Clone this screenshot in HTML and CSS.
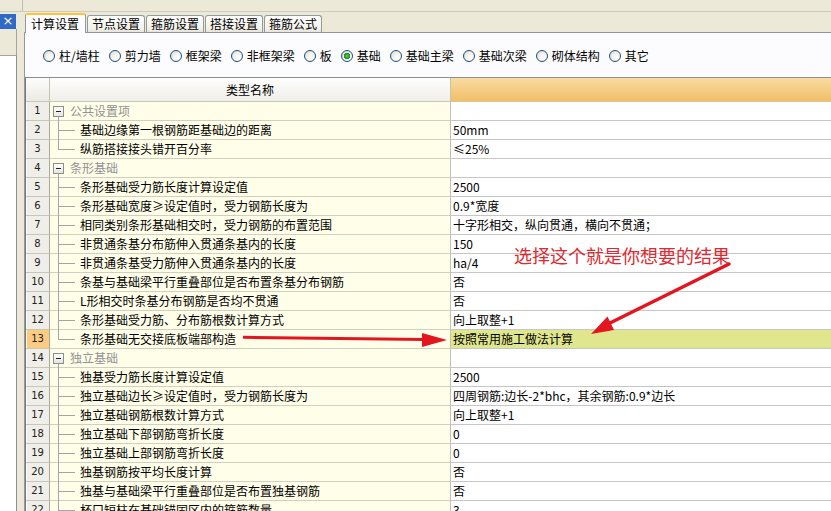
FILE: index.html
```html
<!DOCTYPE html>
<html lang="zh-CN">
<head>
<meta charset="utf-8">
<title>计算设置</title>
<link rel="stylesheet" href="styles.css">
</head>
<body>
<div class="app">
  <div class="topstrip"><div class="topstrip-left"></div></div>
  <div class="main">
    <aside class="side">
      <div class="close">×</div>
      <div class="side-gap"></div>
      <div class="side-list"></div>
    </aside>
    <section class="work">
      <nav class="tabbar">
        <div class="tab active">计算设置</div>
        <div class="tab">节点设置</div>
        <div class="tab">箍筋设置</div>
        <div class="tab">搭接设置</div>
        <div class="tab">箍筋公式</div>
      </nav>
      <div class="panel">
        <div class="radios">
          <span class="opt"><span class="radio"></span>柱/墙柱</span>
          <span class="opt"><span class="radio"></span>剪力墙</span>
          <span class="opt"><span class="radio"></span>框架梁</span>
          <span class="opt"><span class="radio"></span>非框架梁</span>
          <span class="opt"><span class="radio"></span>板</span>
          <span class="opt"><span class="radio checked"></span>基础</span>
          <span class="opt"><span class="radio"></span>基础主梁</span>
          <span class="opt"><span class="radio"></span>基础次梁</span>
          <span class="opt"><span class="radio"></span>砌体结构</span>
          <span class="opt"><span class="radio"></span>其它</span>
        </div>
        <div class="grid">
          <div class="hd hd-num"></div><div class="hd hd-name">类型名称</div><div class="hd hd-val"></div>

          <div class="num">1</div><div class="name group"><span class="toggle"><i class="box"></i></span><span>公共设置项</span></div><div class="val"></div>
          <div class="num">2</div><div class="name"><span class="guide"></span>基础边缘第一根钢筋距基础边的距离</div><div class="val">50mm</div>
          <div class="num">3</div><div class="name"><span class="guide last"></span>纵筋搭接接头错开百分率</div><div class="val">≤25%</div>
          <div class="num">4</div><div class="name group"><span class="toggle"><i class="box"></i></span><span>条形基础</span></div><div class="val"></div>
          <div class="num">5</div><div class="name"><span class="guide"></span>条形基础受力筋长度计算设定值</div><div class="val">2500</div>
          <div class="num">6</div><div class="name"><span class="guide"></span>条形基础宽度≥设定值时，受力钢筋长度为</div><div class="val">0.9*宽度</div>
          <div class="num">7</div><div class="name"><span class="guide"></span>相同类别条形基础相交时，受力钢筋的布置范围</div><div class="val">十字形相交，纵向贯通，横向不贯通；</div>
          <div class="num">8</div><div class="name"><span class="guide"></span>非贯通条基分布筋伸入贯通条基内的长度</div><div class="val">150</div>
          <div class="num">9</div><div class="name"><span class="guide"></span>非贯通条基受力筋伸入贯通条基内的长度</div><div class="val">ha/4</div>
          <div class="num">10</div><div class="name"><span class="guide"></span>条基与基础梁平行重叠部位是否布置条基分布钢筋</div><div class="val">否</div>
          <div class="num">11</div><div class="name"><span class="guide"></span>L形相交时条基分布钢筋是否均不贯通</div><div class="val">否</div>
          <div class="num">12</div><div class="name"><span class="guide"></span>条形基础受力筋、分布筋根数计算方式</div><div class="val">向上取整+1</div>
          <div class="num cur">13</div><div class="name"><span class="guide last"></span>条形基础无交接底板端部构造</div><div class="val sel">按照常用施工做法计算</div>
          <div class="num">14</div><div class="name group"><span class="toggle"><i class="box"></i></span><span>独立基础</span></div><div class="val"></div>
          <div class="num">15</div><div class="name"><span class="guide"></span>独基受力筋长度计算设定值</div><div class="val">2500</div>
          <div class="num">16</div><div class="name"><span class="guide"></span>独立基础边长≥设定值时，受力钢筋长度为</div><div class="val">四周钢筋:边长-2*bhc，其余钢筋:0.9*边长</div>
          <div class="num">17</div><div class="name"><span class="guide"></span>独立基础钢筋根数计算方式</div><div class="val">向上取整+1</div>
          <div class="num">18</div><div class="name"><span class="guide"></span>独立基础下部钢筋弯折长度</div><div class="val">0</div>
          <div class="num">19</div><div class="name"><span class="guide"></span>独立基础上部钢筋弯折长度</div><div class="val">0</div>
          <div class="num">20</div><div class="name"><span class="guide"></span>独基钢筋按平均长度计算</div><div class="val">否</div>
          <div class="num">21</div><div class="name"><span class="guide"></span>独基与基础梁平行重叠部位是否布置独基钢筋</div><div class="val">否</div>
          <div class="num">22</div><div class="name"><span class="guide"></span>杯口短柱在基础锚固区内的箍筋数量</div><div class="val">3</div>
        </div>
      </div>
    </section>
  </div>
  <div class="note">选择这个就是你想要的结果</div>
  <svg class="arrows" width="831" height="511" viewBox="0 0 831 511" aria-hidden="true">
    <line x1="729" y1="264" x2="608" y2="324" stroke="#e3151e" stroke-width="3.5" stroke-linecap="round"/>
    <polygon points="591,334 607.5,316.5 614,330" fill="#e3151e"/>
    <path d="M243 337.3 L425 339.4" stroke="#e3151e" stroke-width="3" fill="none"/>
    <polygon points="447,340 422,333 422,347" fill="#e3151e"/>
  </svg>
</div>
</body>
</html>
```

FILE: styles.css
```css
* { box-sizing: border-box; }

html, body {
  margin: 0;
  padding: 0;
}

body {
  width: 831px;
  height: 511px;
  overflow: hidden;
  background: #ece9d8;
  font-family: "Noto Sans CJK SC", "Liberation Sans", sans-serif;
  font-size: 12px;
  color: #000;
}

.app {
  position: relative;
  width: 831px;
  height: 511px;
  display: flex;
  flex-direction: column;
}

.topstrip {
  height: 12px;
  flex: none;
  background: #ece9d9;
  border-bottom: 1px solid #cfcbba;
}

.topstrip-left {
  width: 23px;
  height: 11px;
  border-right: 1px solid #c2beac;
}

.main {
  flex: 1;
  display: flex;
  min-height: 0;
}

/* left docked panel */
.side {
  width: 17px;
  flex: none;
  display: flex;
  flex-direction: column;
  margin-right: 7px;
}

.close {
  margin-top: 2px;
  width: 16px;
  height: 15px;
  background: #3169c6;
  color: #fff;
  font-family: "DejaVu Sans", sans-serif;
  font-size: 13px;
  line-height: 14px;
  text-align: center;
}

.side-gap {
  height: 26px;
  border-right: 1px solid #a7a59a;
}

.side-list {
  flex: 1;
  background: #fff;
  border-top: 1px solid #a5a5a5;
  border-right: 1px solid #8f8f8f;
}

/* tabbed area */
.work {
  flex: 1;
  display: flex;
  flex-direction: column;
  min-width: 0;
}

.tabbar {
  height: 20px;
  flex: none;
  display: flex;
  align-items: flex-end;
  padding-left: 1px;
}

.tab {
  height: 17px;
  padding: 0 4px;
  margin-right: 1px;
  border: 1px solid #919b9c;
  border-bottom: none;
  border-radius: 3px 3px 0 0;
  background: linear-gradient(#fefefe, #f1f0ea 80%, #e6e4da);
  line-height: 16px;
  white-space: nowrap;
}

.tab.active {
  position: relative;
  z-index: 1;
  height: 20px;
  width: 61px;
  margin-bottom: -1px;
  padding: 0 5px;
  border-top: 2px solid #ffc43c;
  background: #fcfcfe;
  line-height: 17px;
}

.panel {
  flex: 1;
  display: flex;
  flex-direction: column;
  min-height: 0;
  overflow: hidden;
  background: #fcfcfe;
  border-top: 1px solid #8f9494;
  border-left: 1px solid #919b9c;
}

.radios {
  height: 44px;
  flex: none;
  display: flex;
  align-items: center;
  padding: 2px 0 0 18px;
}

.opt {
  display: flex;
  align-items: center;
  margin-right: 9px;
  white-space: nowrap;
  line-height: 14px;
}

.radio {
  width: 12px;
  height: 12px;
  margin-right: 4px;
  border: 1px solid #1f4f7f;
  border-radius: 50%;
  background: radial-gradient(circle at 68% 68%, #ffffff 0, #f3f2ec 45%, #d2d1c8 100%);
}

.radio.checked {
  background:
    radial-gradient(circle, #5fd05f 0, #2aa52a 2px, #1e8f1e 3px, rgba(0,0,0,0) 3.5px),
    radial-gradient(circle at 68% 68%, #ffffff 0, #f3f2ec 45%, #d2d1c8 100%);
}

/* property grid */
.grid {
  flex: 1;
  display: grid;
  grid-template-columns: 24px 401px 1fr;
  grid-template-rows: 24px;
  grid-auto-rows: 19px;
  align-content: start;
  border-top: 1px solid #8d8d8d;
  border-left: 1px solid #7a7a7a;
}

.hd {
  border-bottom: 1px solid #c9c7b9;
}

.hd-num {
  border-right: 1px solid #c4c2b6;
  background: linear-gradient(#fdfdfc, #ebeae4);
}

.hd-name {
  border-right: 1px solid #c4c2b6;
  background: linear-gradient(#fefefd, #efeee9);
  text-align: center;
  line-height: 23px;
}

.hd-val {
  background: linear-gradient(#f8dca2, #f4cb80 55%, #f1c066);
  border-bottom-color: #d9c79c;
}

.num {
  border-right: 1px solid #aaa89b;
  border-bottom: 1px solid #c8c6b8;
  background: #efeee8;
  box-shadow: inset 1px 0 0 #fbfbf8;
  font-family: "DejaVu Sans", sans-serif;
  font-size: 10px;
  color: #222;
  text-align: center;
  line-height: 18px;
}

.num.cur {
  background: #fbcb82;
}

.name {
  display: flex;
  align-items: flex-start;
  border-right: 1px solid #c4c2b6;
  border-bottom: 1px solid #d1cfc0;
  background: #fffee9;
  white-space: nowrap;
  line-height: 18px;
  padding-left: 8px;
}

.guide {
  flex: none;
  width: 22px;
  height: 19px;
  background:
    linear-gradient(#a4a4a4, #a4a4a4) no-repeat 0 0 / 1px 100%,
    linear-gradient(#a4a4a4, #a4a4a4) no-repeat 0 9px / 17px 1px;
}

.guide.last {
  background-size: 1px 10px, 17px 1px;
}

.name.group {
  padding-left: 3px;
  color: #929292;
}

.toggle {
  flex: none;
  width: 11px;
  height: 19px;
  margin-right: 6px;
  display: flex;
  align-items: center;
  background: linear-gradient(#a4a4a4, #a4a4a4) no-repeat 5px 100% / 1px 50%;
}

.box {
  display: block;
  width: 11px;
  height: 11px;
  border: 1px solid #8e8e8e;
  background:
    linear-gradient(#222, #222) no-repeat center / 5px 1px,
    linear-gradient(#ffffff, #e6e6e0);
}

.val {
  border-bottom: 1px solid #c6c6c6;
  background: #fff;
  padding-left: 2px;
  white-space: nowrap;
  line-height: 18px;
}

.val.sel {
  background: #dfe68d;
}

/* annotation overlay */
.note {
  position: absolute;
  left: 514px;
  top: 245px;
  color: #dd2a30;
  font-size: 18px;
  line-height: 20px;
  letter-spacing: 0;
  white-space: nowrap;
}

.arrows {
  position: absolute;
  left: 0;
  top: 0;
  pointer-events: none;
}
```
